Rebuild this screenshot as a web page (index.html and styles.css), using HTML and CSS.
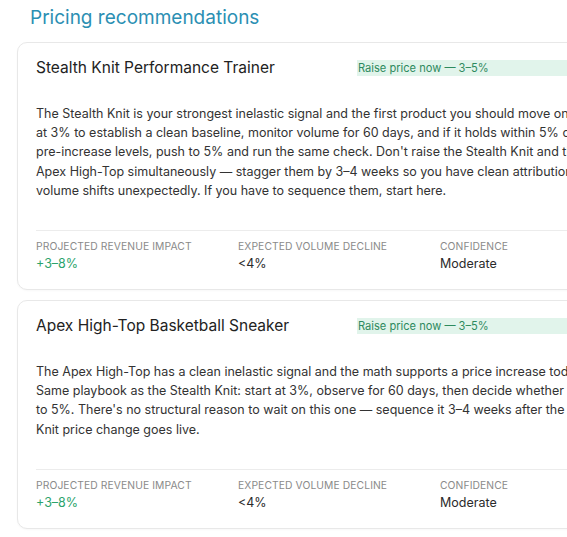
FILE: index.html
```html
<!DOCTYPE html>
<html lang="en">
<head>
<meta charset="utf-8">
<title>Pricing recommendations</title>
<link rel="stylesheet" href="styles.css">
</head>
<body>
<main class="page">
  <h2 class="section-title">Pricing recommendations</h2>
  <div class="card-list">
    <article class="card">
      <header class="card-head">
        <h3 class="product">Stealth Knit Performance Trainer</h3>
        <span class="badge">Raise price now — 3–5%</span>
      </header>
      <p class="rationale">The Stealth Knit is your strongest inelastic signal and the first product you should move on. Start at 3% to establish a clean baseline, monitor volume for 60 days, and if it holds within 5% of <span class="nowrap">pre-increase</span> levels, push to 5% and run the same check. Don't raise the Stealth Knit and the Apex <span class="nowrap">High-Top</span> simultaneously — stagger them by 3–4 weeks so you have clean attribution if volume shifts unexpectedly. If you have to sequence them, start here.</p>
      <div class="metrics">
        <div class="metric"><div class="metric-label">Projected revenue impact</div><div class="metric-value positive">+3–8%</div></div>
        <div class="metric"><div class="metric-label">Expected volume decline</div><div class="metric-value">&lt;4%</div></div>
        <div class="metric"><div class="metric-label">Confidence</div><div class="metric-value">Moderate</div></div>
      </div>
    </article>
    <article class="card">
      <header class="card-head">
        <h3 class="product">Apex High-Top Basketball Sneaker</h3>
        <span class="badge">Raise price now — 3–5%</span>
      </header>
      <p class="rationale">The Apex <span class="nowrap">High-Top</span> has a clean inelastic signal and the math supports a price increase today. Same playbook as the Stealth Knit: start at 3%, observe for 60 days, then decide whether to go to 5%. There's no structural reason to wait on this one — sequence it 3–4 weeks after the Stealth Knit price change goes live.</p>
      <div class="metrics">
        <div class="metric"><div class="metric-label">Projected revenue impact</div><div class="metric-value positive">+3–8%</div></div>
        <div class="metric"><div class="metric-label">Expected volume decline</div><div class="metric-value">&lt;4%</div></div>
        <div class="metric"><div class="metric-label">Confidence</div><div class="metric-value">Moderate</div></div>
      </div>
    </article>
    <article class="card">
      <header class="card-head">
        <h3 class="product">Velocity Runner Pro</h3>
        <span class="badge">Hold price</span>
      </header>
      <p class="rationale">Hold the current price while elasticity data matures.</p>
    </article>
  </div>
</main>
</body>
</html>
```

FILE: styles.css
```css
html {
  overflow: hidden;
}
body {
  margin: 0;
  background: #ffffff;
  font-family: Inter, "Noto Sans", sans-serif;
  color: #2b2b2b;
}
.page {
  padding: 6px 0 0 17px;
  width: 614px;
}
.section-title {
  margin: 0 0 12px 13px;
  font-size: 19px;
  line-height: 24px;
  font-weight: 400;
  color: #2b8fb3;
}
.card-list {
  display: flex;
  flex-direction: column;
  gap: 10px;
}
.card {
  border: 1px solid #e8e8e8;
  border-radius: 10px;
  padding: 16px 18px;
  background: #fff;
  box-shadow: 0 1px 2px rgba(0,0,0,0.03);
}
.card-head {
  display: flex;
  align-items: center;
  gap: 16px;
}
.product {
  margin: 0;
  flex: 0 0 305px;
  font-size: 15.5px;
  line-height: 18px;
  font-weight: 400;
  color: #222;
}
.badge {
  flex: 1;
  font-size: 11.1px;
  line-height: 16px;
  padding: 0 1px;
  background: #e1f4eb;
  color: #2e8a5e;
}
.rationale {
  margin: 27px 0 30px;
  font-size: 12.5px;
  line-height: 19.2px;
  color: #333;
}
.nowrap {
  white-space: nowrap;
}
.metrics {
  border-top: 1px solid #ececec;
  padding-top: 8px;
  display: grid;
  grid-template-columns: repeat(3, 1fr);
  column-gap: 30px;
}
.metric-label {
  font-size: 10.3px;
  line-height: 15px;
  text-transform: uppercase;
  color: #8a8a8a;
  letter-spacing: 0.1px;
}
.metric-value {
  margin-top: 1px;
  font-size: 12.5px;
  line-height: 18px;
  color: #2b2b2b;
}
.metric-value.positive {
  color: #2ba36b;
}
```
